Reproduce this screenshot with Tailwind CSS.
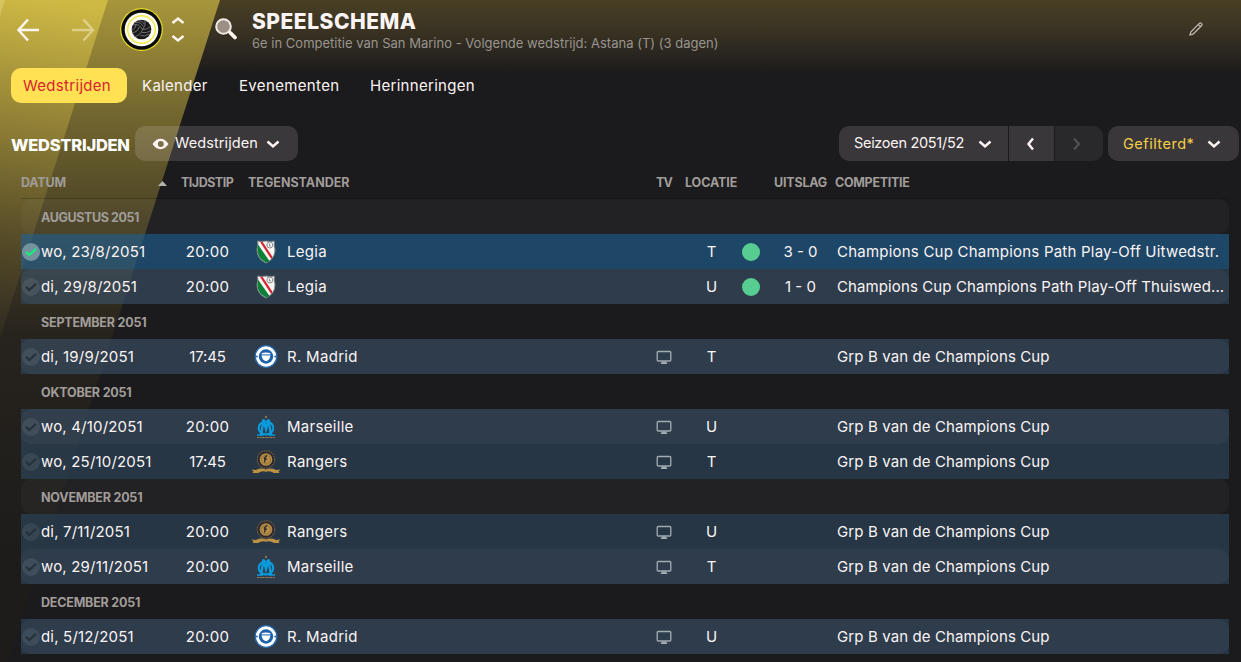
<!DOCTYPE html>
<html lang="nl">
<head>
    <meta charset="UTF-8">
    <meta name="viewport" content="width=device-width, initial-scale=1.0">
    <title>Speelschema</title>
    <script src="https://cdn.jsdelivr.net/npm/@tailwindcss/browser@4"></script>
</head>
<body class="relative w-[1241px] h-[662px] overflow-hidden bg-[#1b1a1c] font-['Inter',sans-serif] text-[15px] text-[#fbf4f4]">

    <!-- Background stripes -->
    <svg class="absolute inset-0" width="1241" height="662" viewBox="0 0 1241 662">
        <defs>
            <linearGradient id="top" x1="0" y1="0" x2="0" y2="75" gradientUnits="userSpaceOnUse">
                <stop offset="0" stop-color="#483f24"/>
                <stop offset=".4" stop-color="#3a3323"/>
                <stop offset="1" stop-color="#1b1a1c"/>
            </linearGradient>
            <linearGradient id="outer" x1="0" y1="0" x2="0" y2="560" gradientUnits="userSpaceOnUse">
                <stop offset="0" stop-color="#a8963b"/>
                <stop offset=".2" stop-color="#73672f"/>
                <stop offset=".4" stop-color="#494125"/>
                <stop offset=".6" stop-color="#27231d"/>
                <stop offset="1" stop-color="#1d1c1b"/>
            </linearGradient>
            <linearGradient id="inner" x1="50" y1="0" x2="0" y2="350" gradientUnits="userSpaceOnUse">
                <stop offset="0" stop-color="#cfb945"/>
                <stop offset=".3" stop-color="#9a8938"/>
                <stop offset=".65" stop-color="#5b5029"/>
                <stop offset="1" stop-color="#2a2620"/>
            </linearGradient>
        </defs>
        <rect width="1241" height="75" fill="url(#top)"/>
        <path d="M0 0H220L8 662H0Z" fill="url(#outer)"/>
        <path d="M0 0H108L0 338Z" fill="url(#inner)"/>
        <path d="M0 0H5L0 16Z" fill="#e3d27a" opacity=".5"/>
    </svg>

    <div class="relative">
        <!-- Title bar -->
        <header class="flex h-[60px] items-center">
            <svg class="ml-[16px]" width="24" height="24" viewBox="0 0 24 24" fill="none" stroke="#fff5f0" stroke-width="2.5"><path d="M23 12H3M12 1.5L2.500 12L12 22.5"/></svg>
            <svg class="ml-[32px] opacity-45" width="24" height="24" viewBox="0 0 24 24" fill="none" stroke="#fff5e0" stroke-width="2.5"><path d="M0 12H20M11.500 1.5L21 12L11.500 22.5"/></svg>
            <svg class="ml-[24px]" width="43" height="44" viewBox="0 0 43 44">
                <circle cx="21.500" cy="21.500" r="21.400" fill="#e3dc28"/>
                <circle cx="21.500" cy="21.500" r="20.200" fill="#0b0b0b"/>
                <circle cx="21.500" cy="21.500" r="16.800" fill="#fbfaf2"/>
                <circle cx="21.500" cy="21.500" r="13.800" fill="none" stroke="#f2ea4a" stroke-width="1.500"/>
                <circle cx="21.500" cy="21.500" r="9.800" fill="#1a1a1a"/>
                <g fill="none" stroke="#77777a" stroke-width=".9">
                    <path d="M13 17Q19 15 22.500 21.500Q26 18 25 12.500M14.500 14.800Q20 13 23.500 18.500M18 12.500Q22 12.500 24.500 16"/>
                    <path d="M22.500 21.500Q21 27 15 28.500M19.500 19Q18 24 12.500 25M16 17Q15.500 20.500 12 22"/>
                    <path d="M22.500 21.500Q27 22 30.500 18.500M22 24.500Q27 25.500 31 22.500M20.500 27.500Q25 29 29 26"/>
                </g>
            </svg>
            <svg class="ml-[7px]" width="16" height="28" viewBox="0 0 16 28" fill="none" stroke="#fff5f0" stroke-width="2.500"><path d="M2.500 7L8 2.500L13.500 7M2.500 20L8 24.500L13.500 20"/></svg>
            <svg class="ml-[28px] -mt-[2px]" width="24" height="24" viewBox="0 0 24 24" fill="none">
                <circle cx="9.500" cy="9.500" r="7.300" fill="#9c9084" stroke="#f3e9e5" stroke-width="2"/>
                <path d="M16.500 16L21 20.500" stroke="#fff5f0" stroke-width="3.800" stroke-linecap="round"/>
                <path d="M14.500 14.500L17 17" stroke="#fff5f0" stroke-width="2"/>
            </svg>
            <div class="ml-[14px] mt-px">
                <h1 class="text-[21px] leading-[24px] font-extrabold tracking-[0.5px]">SPEELSCHEMA</h1>
                <p class="text-[13px] leading-[18px] tracking-[0.01px] text-[#98948f]">6e in Competitie van San Marino - Volgende wedstrijd: Astana (T) (3 dagen)</p>
            </div>
            <svg class="ml-auto mr-[38px] -mt-[2px]" width="14" height="14" viewBox="0 0 14 14" fill="none" stroke="#c5beb6" stroke-width="1.200"><path d="M1 13L1.800 10L10.500 1.200Q11.500 .6 12.500 1.600Q13.400 2.600 12.700 3.500L4 12.200ZM9.300 2.500L11.500 4.700"/></svg>
        </header>

        <!-- Tabs -->
        <nav class="mt-[8px] ml-[11px] flex h-[35px] items-center tracking-[0.3px]">
            <a class="flex h-full w-[116px] items-center rounded-[10px] bg-[#ffe153] pt-[2px] pl-[12px] text-[#d81f30]">Wedstrijden</a>
            <a class="ml-[15px] w-[97px] pt-[2px]">Kalender</a>
            <a class="w-[131px] pt-[2px] tracking-[0.35px]">Evenementen</a>
            <a class="pt-[2px]">Herinneringen</a>
        </nav>

        <!-- Toolbar -->
        <div class="mt-[23px] flex h-[35px] items-center pl-[11px] pr-[2px]">
            <h2 class="w-[124px] pt-[4px] text-[16.5px] font-extrabold tracking-[-0.25px] text-white">WEDSTRIJDEN</h2>
            <button class="flex h-full w-[163px] items-center rounded-[10px] bg-[#fff0f5]/14 pl-[17px]">
                <svg width="17" height="12" viewBox="0 0 17 12"><path fill="#fff5f4" fill-rule="evenodd" d="M.5 6Q4 .8 8.500 .8T16.500 6Q13 11.200 8.500 11.200T.5 6ZM8.800 3A3 3 0 1 0 8.800 9A3 3 0 1 0 8.800 3Z"/></svg>
                <span class="ml-[6px] w-[91px] -mt-px text-left text-[14.5px] tracking-[0.1px]">Wedstrijden</span>
                <svg class="mt-px" width="14" height="9" viewBox="0 0 14 9" fill="none" stroke="#fff5f4" stroke-width="2.400"><path d="M1.500 1.500L7 6.500L12.500 1.500"/></svg>
            </button>
            <div class="ml-auto flex h-full gap-px">
                <button class="flex w-[169px] items-center rounded-l-[10px] bg-[#3a373b] pl-[15px]">
                    <span class="w-[124px] -mt-px text-left text-[14.5px] tracking-[-0.3px]">Seizoen 2051/52</span>
                    <svg class="mt-[2px]" width="14" height="9" viewBox="0 0 14 9" fill="none" stroke="#fff5f4" stroke-width="2.400"><path d="M1.500 1.500L7 6.500L12.500 1.500"/></svg>
                </button>
                <button class="flex w-[45px] items-center justify-center bg-[#3a373b] pr-[2px]">
                    <svg width="9" height="14" viewBox="0 0 9 14" fill="none" stroke="#fff5f4" stroke-width="2.400"><path d="M7 1.500L2.500 7L7 12.500"/></svg>
                </button>
                <button class="flex w-[48px] items-center justify-center rounded-r-[10px] bg-[#29282b]">
                    <svg class="-ml-[5px]" width="9" height="14" viewBox="0 0 9 14" fill="none" stroke="#555356" stroke-width="2"><path d="M2 1.500L7 7L2 12.500"/></svg>
                </button>
            </div>
            <button class="ml-[5px] flex h-full w-[131px] items-center rounded-[10px] bg-[#3a373b] pl-[15px]">
                <span class="w-[84px] pt-px text-left text-[14.5px] tracking-[0.5px] text-[#f5cf45]">Gefilterd*</span>
                <svg class="mt-px" width="14" height="9" viewBox="0 0 14 9" fill="none" stroke="#fff5f4" stroke-width="2.400"><path d="M1.500 1.500L7 6.500L12.500 1.500"/></svg>
            </button>
        </div>

        <!-- Column headings -->
        <div class="ml-[21px] mt-[4px] flex h-[34px] w-[1208px] items-center border-b border-black/20 pt-[4px] text-[12.5px] font-bold tracking-[-0.2px] text-[#a09d9a]">
            <span class="w-[137px]">DATUM</span>
            <svg class="mr-[14px] -mt-px" width="9" height="5" viewBox="0 0 9 5"><path d="M0 5L4.500 0L9 5Z" fill="#b5b2ae"/></svg>
            <span class="w-[67px] tracking-[-0.5px]">TIJDSTIP</span>
            <span class="w-[408px] tracking-[0px]">TEGENSTANDER</span>
            <span class="w-[29px] tracking-[-0.8px]">TV</span>
            <span class="w-[89px] tracking-[-0.1px]">LOCATIE</span>
            <span class="w-[61px]">UITSLAG</span>
            <span class="tracking-[-0.3px]">COMPETITIE</span>
        </div>

        <!-- Fixtures -->
        <div id="fixtures" class="ml-[21px] w-[1208px]"></div>
    </div>

    <script>
        const crests = {
            'Legia': `<svg width="20" height="24" viewBox="0 0 20 24">
                <path d="M1.500 1Q5 2 10 1Q15 2 18.500 1Q17.500 5 19 9C19 16 16 20 10 23C4 20 1 16 1 9Q2.500 5 1.500 1Z" fill="#f6f6f4" stroke="#7c8180" stroke-width="1"/>
                <path d="M2 4.500L13.500 21Q12 22 10 22.500C4.500 19.500 1.500 16 1.500 9Z" fill="#0d8038"/>
                <path d="M4 1.800L6.500 1.800L16.600 17L15.200 19Z" fill="#d8222c"/>
                <circle cx="13.800" cy="5" r="3" fill="none" stroke="#8d8d8d" stroke-width="1"/>
                <path d="M13.500 3.500V6H15" fill="none" stroke="#777" stroke-width=".8"/></svg>`,
            'R. Madrid': `<svg width="24" height="24" viewBox="0 0 24 24">
                <circle cx="12" cy="11.500" r="10.800" fill="#fff" stroke="#2468ae" stroke-width="1.300"/>
                <circle cx="12" cy="11.500" r="7.200" fill="#1d61a8"/>
                <path d="M7.800 8Q12 6.900 16.200 8V11.500Q15.700 15 12 16.300Q8.300 15 7.800 11.500Z" fill="#fff"/>
                <path d="M8 9.900H16" stroke="#1d61a8" stroke-width="1"/>
                <circle cx="2.900" cy="11.500" r=".9" fill="#1d61a8"/><circle cx="21.100" cy="11.500" r=".9" fill="#1d61a8"/></svg>`,
            'Marseille': `<svg width="20" height="24" viewBox="0 0 20 24">
                <path d="M10 .3L10.500 1.400L11.500 1.500L10.700 2.200L11 3.300L10 2.700L9 3.300L9.300 2.200L8.500 1.500L9.500 1.400Z" fill="#a8834c"/>
                <g fill="none" stroke="#0a9bdc" stroke-width="2.100"><ellipse cx="10" cy="13" rx="7.300" ry="6.500"/>
                <path d="M5 20.500L7.500 4.500L10 14L12.500 4.500L15 20.500" stroke-width="2.500"/><path d="M1 20H7M13 20H19" stroke-width="1.600"/></g>
                <path d="M1 22.500H19" stroke="#9a7d50" stroke-width="1.200" stroke-dasharray="2 .6"/></svg>`,
            'Rangers': `<svg width="30" height="24" viewBox="0 0 30 24">
                <circle cx="15" cy="9.500" r="8.700" fill="#2c2a30" stroke="#6d5b40" stroke-width="1.200" stroke-dasharray="1.600 .8"/>
                <circle cx="15" cy="9.500" r="6.300" fill="#b88f48"/>
                <circle cx="15" cy="9.500" r="4.500" fill="none" stroke="#84632e" stroke-width=".7"/>
                <path d="M16 5.500L13.300 8L14 10L13.500 12.500M14 8.500L16 9.500" fill="none" stroke="#302a28" stroke-width="1.300"/>
                <path d="M.5 19.500L5 20Q10 17.500 15 19.500Q20 17.500 25 20L29.500 19.500L27.500 21.500L28.500 23H23Q19 20.500 15 21.700Q11 20.500 7 23H1.500L2.500 21.500Z" fill="#bd9143"/></svg>`
        };

        const tvIcon = `<svg width="16" height="15" viewBox="0 0 16 15" fill="none" stroke="#a3abb2" stroke-width="1.300"><rect x="1.200" y="1.500" width="13.600" height="9.500" rx="1"/><path d="M4.500 14H11.500L10 11.500H6Z" fill="#a3abb2" stroke="none"/></svg>`;

        const rows = [
            { month: 'AUGUSTUS 2051' },
            { date: 'wo, 23/8/2051', time: '20:00', team: 'Legia', loc: 'T', score: '3 - 0', comp: 'Champions Cup Champions Path Play-Off Uitwedstr.', selected: true },
            { date: 'di, 29/8/2051', time: '20:00', team: 'Legia', loc: 'U', score: '1 - 0', comp: 'Champions Cup Champions Path Play-Off Thuiswed...' },
            { month: 'SEPTEMBER 2051' },
            { date: 'di, 19/9/2051', time: '17:45', team: 'R. Madrid', loc: 'T', tv: true },
            { month: 'OKTOBER 2051' },
            { date: 'wo, 4/10/2051', time: '20:00', team: 'Marseille', loc: 'U', tv: true },
            { date: 'wo, 25/10/2051', time: '17:45', team: 'Rangers', loc: 'T', tv: true },
            { month: 'NOVEMBER 2051' },
            { date: 'di, 7/11/2051', time: '20:00', team: 'Rangers', loc: 'U', tv: true },
            { date: 'wo, 29/11/2051', time: '20:00', team: 'Marseille', loc: 'T', tv: true },
            { month: 'DECEMBER 2051' },
            { date: 'di, 5/12/2051', time: '20:00', team: 'R. Madrid', loc: 'U', tv: true }
        ];

        document.getElementById('fixtures').innerHTML = rows.map((r, i) => {
            const stripe = i % 2 === 0 ? (r.month ? 'bg-white/3' : 'bg-[#ffe8f4]/4') : '';
            if (r.month) {
                const tracking = r.month.startsWith('AUG') ? 'tracking-[-0.4px]' : 'tracking-[-0.2px]';
                return `<div class="flex h-[35px] items-center rounded-[10px] pl-[20px] pt-[3px] text-[12.5px] font-bold ${tracking} text-[#a09d9a] ${stripe}">${r.month}</div>`;
            }
            const disc = r.selected ? 'bg-[#73929d]' : 'bg-white/8';
            const tick = r.selected ? '#14f07c' : '#27313a';
            return `<div class="${r.selected ? 'bg-[#226497]/60' : 'bg-[#2f4a61]/60'}">
                <div class="grid h-[35px] grid-cols-[20px_140px_53px_53px_357px_40px_55px_24px_74px_392px] items-center rounded-[10px] whitespace-nowrap ${stripe}">
                    <span class="ml-px flex size-[18px] items-center justify-center rounded-full ${disc}">
                        <svg class="shrink-0" width="12" height="10" viewBox="0 0 12 10" fill="none" stroke="${tick}" stroke-width="2.200"><path d="M1 4.800L4.300 8L11 1.800"/></svg>
                    </span>
                    <span class="pt-[2px] tracking-[0.18px]">${r.date}</span>
                    <span class="pt-[2px] text-center ${r.time === '17:45' ? 'tracking-[-0.1px]' : 'tracking-[0.35px]'}">${r.time}</span>
                    <span class="flex justify-center pl-[11px]">${crests[r.team]}</span>
                    <span class="pt-[2px] tracking-[0.3px]">${r.team}</span>
                    <span class="flex justify-center pt-px">${r.tv ? tvIcon : ''}</span>
                    <span class="pt-[2px] text-center">${r.loc}</span>
                    <span>${r.score ? '<i class="ml-[3px] block size-[18px] rounded-full bg-[#58cd92]"></i>' : ''}</span>
                    <span class="pt-[2px] pl-px text-center">${r.score || ''}</span>
                    <span class="pt-[2px] ${r.selected ? 'tracking-[0.22px]' : 'tracking-[0.11px]'}">${r.comp || 'Grp B van de Champions Cup'}</span>
                </div>
            </div>`;
        }).join('');
    </script>
</body>
</html>
